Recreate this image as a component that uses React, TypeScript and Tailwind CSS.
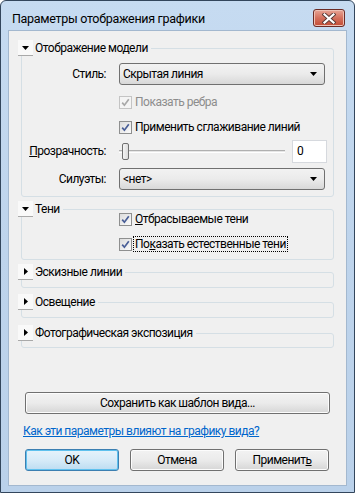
import React from "react";

function Check({ disabled }: { disabled?: boolean }) {
  return (
    <span
      className={`w-[13px] h-[13px] shrink-0 border ${
        disabled ? "border-[#c4c4c4]" : "border-[#8e8f8f]"
      } bg-white flex items-center justify-center`}
    >
      <span
        className={`w-[11px] h-[11px] flex items-center justify-center ${
          disabled ? "bg-[#f4f4f4]" : "bg-gradient-to-br from-[#dcdcdc] to-[#fbfbfb]"
        }`}
      >
        <svg width="9" height="9" viewBox="0 0 9 9">
          <path
            d="M1.2 4.6 L3.4 7.2 L7.8 1.2"
            stroke={disabled ? "#a8a8a8" : "#4a5f97"}
            strokeWidth="1.7"
            fill="none"
          />
        </svg>
      </span>
    </span>
  );
}

function Tri({ open }: { open?: boolean }) {
  return (
    <span className="w-[15px] h-[16px] shrink-0 bg-[#f9f9f9] border-b border-[#a9a9a9] flex items-center justify-center">
      {open ? (
        <svg width="7" height="4" viewBox="0 0 7 4">
          <path d="M0 0 H7 L3.5 4 Z" fill="#000" />
        </svg>
      ) : (
        <svg width="4" height="7" viewBox="0 0 4 7">
          <path d="M0 0 V7 L4 3.5 Z" fill="#000" />
        </svg>
      )}
    </span>
  );
}

function GroupHeader({ label, open }: { label: string; open?: boolean }) {
  return (
    <div className="relative z-10 h-[16px] -ml-[3px] flex">
      <div className="flex items-center bg-[#f0f0f0] pr-[3px]">
        <Tri open={open} />
        <span className="ml-[2px] leading-[16px]">{label}</span>
      </div>
    </div>
  );
}

function Select({ text }: { text: string }) {
  return (
    <div className="w-[206px] h-[22px] border border-[#707070] rounded-[3px] bg-gradient-to-b from-[#f2f2f2] via-[#ebebeb] to-[#d8d8d8] flex items-center pl-[3px] pr-[7px] justify-between">
      <span>{text}</span>
      <svg width="7" height="4" viewBox="0 0 7 4">
        <path d="M0 0 H7 L3.5 4 Z" fill="#000" />
      </svg>
    </div>
  );
}

function Btn({
  children,
  w,
  def,
}: {
  children: React.ReactNode;
  w: string;
  def?: boolean;
}) {
  return (
    <div
      className={`${w} h-[22px] rounded-[3px] border flex items-center justify-center ${
        def
          ? "border-[#3c7fb1] bg-gradient-to-b from-[#e6f3fb] via-[#d7ebf8] to-[#bcdcf1] shadow-[inset_0_0_0_1px_#5fc1ee]"
          : "border-[#707070] bg-gradient-to-b from-[#f2f2f2] via-[#ebebeb] to-[#d6d6d6] shadow-[inset_0_0_0_1px_#fcfcfc]"
      }`}
    >
      {children}
    </div>
  );
}

export default function App() {
  return (
    <div className="w-[355px] h-[493px] font-['Roboto',sans-serif] text-[12px] tracking-[-0.5px] text-black">
      <div className="w-full h-full border border-[#33465c] rounded-t-[6px] bg-gradient-to-b from-[#c6dbf1] via-[#bed4ec] to-[#bad1ea] flex flex-col overflow-hidden">
        {/* title bar */}
        <div className="h-[29px] shrink-0 flex items-start justify-between pl-[11px] pr-[9px]">
          <span className="mt-[10px] leading-[16px] text-[12.5px] tracking-[-0.3px]">Параметры отображения графики</span>
          <div className="mt-[8px] w-[32px] h-[18px] rounded-[3px] border border-[#6b2c26] bg-gradient-to-b from-[#e7a596] via-[#d4705d] to-[#c24a33] shadow-[inset_0_0_0_1px_#eec0b4] flex items-center justify-center">
            <svg width="14" height="11" viewBox="0 0 14 11">
              <path d="M2.5 1.5 L11.5 9.5 M11.5 1.5 L2.5 9.5" stroke="#5a3a36" strokeWidth="4" strokeLinecap="square" />
              <path d="M2.5 1.5 L11.5 9.5 M11.5 1.5 L2.5 9.5" stroke="#ffffff" strokeWidth="2.2" strokeLinecap="square" />
            </svg>
          </div>
        </div>
        {/* client */}
        <div className="mx-[7px] h-[456px] shrink-0 bg-[#f0f0f0] border border-[#a3b8cf] flex flex-col">
          {/* group 1 */}
          <div className="ml-[12px] w-[313px] mt-[9px] flex flex-col">
            <GroupHeader label="Отображение модели" open />
            <div className="-mt-[8px] border border-[#d5dfe5] rounded-[3px] pt-[14px] pb-[6px] flex flex-col">
              <div className="flex items-center h-[22px]">
                <span className="w-[84px] text-right">Стиль:</span>
                <div className="ml-[13px]">
                  <Select text="Скрытая линия" />
                </div>
              </div>
              <div className="flex items-center h-[16px] mt-[9px] pl-[97px] text-[#8d8d8d]">
                <Check disabled />
                <span className="ml-[3px]">Показать ребра</span>
              </div>
              <div className="flex items-center h-[16px] mt-[9px] pl-[97px]">
                <Check />
                <span className="ml-[3px]">Применить сглаживание линий</span>
              </div>
              <div className="flex items-center h-[22px] mt-[5px]">
                <span className="w-[84px] text-right">
                  <u>П</u>розрачность:
                </span>
                <div className="ml-[13px] w-[166px] h-[18px] relative flex items-center">
                  <div className="w-full h-[3px] border-t border-[#b0b0b0] border-b border-b-white bg-[#e6e6e6]" />
                  <div className="absolute left-[3px] top-[1px] w-[7px] h-[17px] rounded-[2px] border border-[#707070] bg-gradient-to-r from-[#f5f5f5] to-[#dcdcdc]" />
                </div>
                <div className="ml-[7px] w-[35px] h-[23px] bg-white border border-[#d6d9de] flex items-center pl-[4px]">
                  0
                </div>
              </div>
              <div className="flex items-center h-[22px] mt-[6px]">
                <span className="w-[84px] text-right">Силуэты:</span>
                <div className="ml-[13px]">
                  <Select text="<нет>" />
                </div>
              </div>
            </div>
          </div>
          {/* group 2 */}
          <div className="ml-[12px] w-[313px] mt-[4px] flex flex-col">
            <GroupHeader label="Тени" open />
            <div className="-mt-[8px] border border-[#d5dfe5] rounded-[3px] pt-[1px] pb-[7px] flex flex-col">
              <div className="flex items-center h-[16px] pl-[97px]">
                <Check />
                <span className="ml-[3px]">
                  <u>О</u>тбрасываемые тени
                </span>
              </div>
              <div className="flex items-center h-[16px] mt-[9px] pl-[97px]">
                <Check />
                <span className="ml-[1px] px-[1px] border border-dotted border-black leading-[14px]">
                  По<u>к</u>азать естественные тени
                </span>
              </div>
            </div>
          </div>
          {/* collapsed groups */}
          <div className="ml-[12px] w-[313px] mt-[4px] flex flex-col">
            <GroupHeader label="Эскизные линии" />
            <div className="-mt-[8px] h-[16px] border border-[#d5dfe5] rounded-[3px]" />
          </div>
          <div className="ml-[12px] w-[313px] mt-[6px] flex flex-col">
            <GroupHeader label="Освещение" />
            <div className="-mt-[8px] h-[16px] border border-[#d5dfe5] rounded-[3px]" />
          </div>
          <div className="ml-[12px] w-[313px] mt-[7px] flex flex-col">
            <GroupHeader label="Фотографическая экспозиция" />
            <div className="-mt-[8px] h-[15px] border border-[#d5dfe5] rounded-[3px]" />
          </div>
          {/* save template */}
          <div className="ml-[16px] mt-[44px]">
            <Btn w="w-[305px]">Сохранить как шаблон вида...</Btn>
          </div>
          <div className="ml-[14px] mt-[9px] h-[16px] leading-[16px] text-[#0066cc] underline">
            Как эти параметры влияют на графику вида?
          </div>
          <div className="ml-[16px] mt-[10px] flex gap-[11px]">
            <Btn w="w-[94px]" def>
              OK
            </Btn>
            <Btn w="w-[94px]">Отмена</Btn>
            <Btn w="w-[94px]">
              Применит<u>ь</u>
            </Btn>
          </div>
        </div>
      </div>
    </div>
  );
}
